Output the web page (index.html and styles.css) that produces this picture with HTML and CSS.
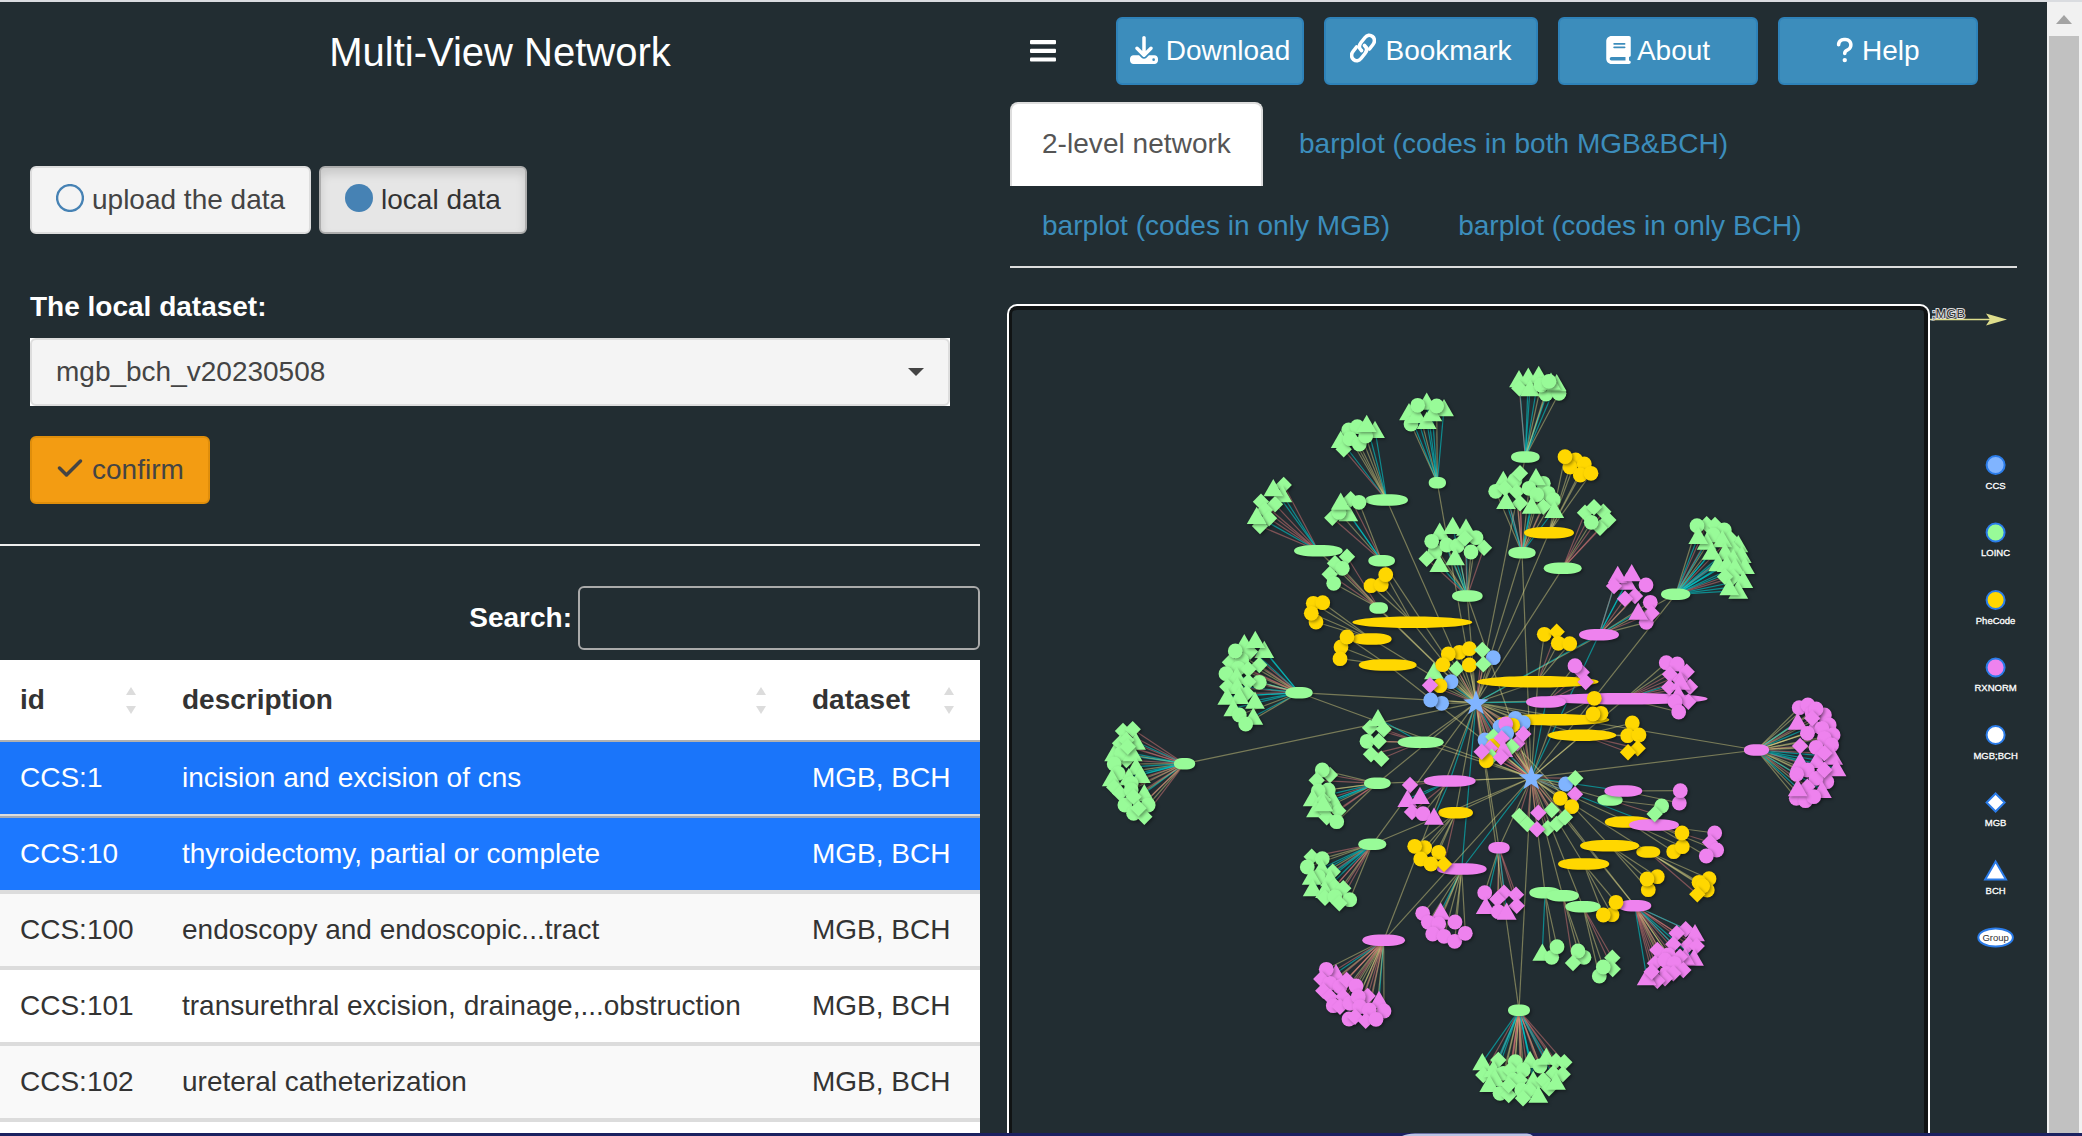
FILE: index.html
```html
<!DOCTYPE html>
<html lang="en">
<head>
<meta charset="utf-8">
<title>Multi-View Network</title>
<link rel="stylesheet" href="styles.css">
</head>
<body>
<div class="topline"></div>
<main class="page">
  <section class="left">
    <h1 class="title">Multi-View Network</h1>
    <div class="controls">
      <div class="choices">
        <button class="btn"><svg class="ico" viewBox="0 0 28 28"><circle cx="14" cy="14" r="12.9" fill="none" stroke="#4682b4" stroke-width="2.4"/></svg>upload the data</button>
        <button class="btn active"><svg class="ico" viewBox="0 0 28 28"><circle cx="14" cy="14" r="14" fill="#4682b4"/></svg>local data</button>
      </div>
      <label class="field-label">The local dataset:</label>
      <div class="select"><div class="select-face">mgb_bch_v20230508<i class="caret"></i></div></div>
      <button class="btn confirm"><svg class="ico check" viewBox="0 0 448 512"><path fill="currentColor" d="M438.6 105.4c12.5 12.5 12.5 32.8 0 45.3l-256 256c-12.5 12.5-32.8 12.5-45.3 0l-128-128c-12.5-12.5-12.5-32.8 0-45.3s32.8-12.5 45.3 0L160 338.7 393.4 105.4c12.5-12.5 32.8-12.5 45.3 0z"/></svg>confirm</button>
    </div>
    <div class="rule"></div>
    <div class="search"><label>Search:</label><input type="text" class="search-box"></div>
    <div class="table">
      <div class="tr th"><div>id<i class="sort"></i></div><div>description<i class="sort"></i></div><div>dataset<i class="sort"></i></div></div>
      <div class="tr sel"><div>CCS:1</div><div>incision and excision of cns</div><div>MGB, BCH</div></div>
      <div class="tr sel second"><div>CCS:10</div><div>thyroidectomy, partial or complete</div><div>MGB, BCH</div></div>
      <div class="tr odd"><div>CCS:100</div><div>endoscopy and endoscopic...tract</div><div>MGB, BCH</div></div>
      <div class="tr"><div>CCS:101</div><div>transurethral excision, drainage,...obstruction</div><div>MGB, BCH</div></div>
      <div class="tr odd"><div>CCS:102</div><div>ureteral catheterization</div><div>MGB, BCH</div></div>
      <div class="tr last"></div>
    </div>
  </section>
  <section class="right">
    <header class="toolbar">
      <svg class="bars" viewBox="0 0 26 22"><g fill="#fff"><rect width="26" height="4.2" rx="1"/><rect y="8.7" width="26" height="4.2" rx="1"/><rect y="17.4" width="26" height="4.2" rx="1"/></g></svg>
      <button class="tool w1"><svg class="ico" viewBox="0 0 512 512"><path fill="currentColor" d="M288 32c0-17.7-14.3-32-32-32s-32 14.3-32 32V274.7l-73.4-73.4c-12.5-12.5-32.8-12.5-45.3 0s-12.5 32.8 0 45.3l128 128c12.5 12.5 32.8 12.5 45.3 0l128-128c12.5-12.5 12.5-32.8 0-45.3s-32.8-12.5-45.3 0L288 274.7V32zM64 352c-35.3 0-64 28.7-64 64v32c0 35.3 28.7 64 64 64H448c35.3 0 64-28.7 64-64V416c0-35.3-28.7-64-64-64H346.5l-45.3 45.3c-25 25-65.5 25-90.5 0L165.5 352H64zm368 56a24 24 0 1 1 0 48 24 24 0 1 1 0-48z"/></svg>Download</button>
      <button class="tool w2"><svg class="ico link" viewBox="0 0 26 30"><g fill="none" stroke="currentColor" stroke-width="3.6" stroke-linecap="round"><path d="M11.5 17.5C8.5 15 9 12 11 9.5L15 4.5C17 2 20 1.5 22.5 3.5S25 9 23 11.5L19.5 16"/><path d="M14.5 12.5C17.5 15 17 18 15 20.5L11 25.5C9 28 6 28.5 3.5 26.5S1 21 3 18.5L6.5 14"/></g></svg>Bookmark</button>
      <button class="tool"><svg class="ico book" viewBox="0 0 448 512"><path fill="currentColor" d="M96 0C43 0 0 43 0 96V416c0 53 43 96 96 96H384h32c17.7 0 32-14.3 32-32s-14.3-32-32-32V384c17.7 0 32-14.3 32-32V32c0-17.7-14.3-32-32-32H384 96zm0 384H352v64H96c-17.7 0-32-14.3-32-32s14.3-32 32-32zm32-240c0-8.8 7.2-16 16-16H336c8.8 0 16 7.2 16 16s-7.2 16-16 16H144c-8.8 0-16-7.2-16-16zm16 48H336c8.8 0 16 7.2 16 16s-7.2 16-16 16H144c-8.8 0-16-7.2-16-16s7.2-16 16-16z"/></svg>About</button>
      <button class="tool"><svg class="ico quest" viewBox="0 0 320 512"><path fill="currentColor" d="M80 160c0-35.3 28.7-64 64-64h32c35.3 0 64 28.7 64 64v3.6c0 21.8-11.1 42.1-29.4 53.8l-42.2 27.1c-25.2 16.2-40.4 44.1-40.4 74V320c0 17.7 14.3 32 32 32s32-14.3 32-32v-1.4c0-8.2 4.2-15.8 11-20.2l42.2-27.1c36.6-23.6 58.8-64.1 58.8-107.7V160c0-70.7-57.3-128-128-128H144C73.3 32 16 89.3 16 160c0 17.7 14.3 32 32 32s32-14.3 32-32zm80 320a40 40 0 1 0 0-80 40 40 0 1 0 0 80z"/></svg>Help</button>
    </header>
    <nav class="tabs">
      <a class="tab current">2-level network</a><a class="tab">barplot (codes in both MGB&amp;BCH)</a><a class="tab">barplot (codes in only MGB)</a><a class="tab">barplot (codes in only BCH)</a>
    </nav>
    <div class="plot">
      <div class="frame"><svg id="graph" width="919" height="830" viewBox="1009 306 919 830"></svg></div>
      <svg class="legend" width="118" height="832" viewBox="1930 304 118 832">
        <path d="M1930 319.5H1990" stroke="#dede8c" stroke-width="1.6"/><path d="M2007 319.5L1986 313.5L1990 319.5L1986 325.5Z" fill="#dede8c"/>
        <text x="1948.5" y="318" class="edge-label">;MGB</text>
        <g stroke="#2b7ce9" stroke-width="2">
          <circle cx="1995.6" cy="465" r="9" fill="#80b4ff"/>
          <circle cx="1995.6" cy="532.5" r="9" fill="#98fb98"/>
          <circle cx="1995.6" cy="600" r="9" fill="#ffd700"/>
          <circle cx="1995.6" cy="667.5" r="9" fill="#ee82ee"/>
          <circle cx="1995.6" cy="735" r="9" fill="#fff"/>
          <path d="M1995.6 793.5L2004.6 802.5L1995.6 811.5L1986.6 802.5Z" fill="#fff"/>
          <path d="M1995.6 861.5L2006 879.5H1985.2Z" fill="#fff"/>
          <ellipse cx="1995.6" cy="937.5" rx="17.3" ry="9" fill="#fff"/>
        </g>
        <g class="names">
          <text x="1995.6" y="489">CCS</text><text x="1995.6" y="556">LOINC</text><text x="1995.6" y="624">PheCode</text><text x="1995.6" y="691">RXNORM</text><text x="1995.6" y="759">MGB;BCH</text><text x="1995.6" y="826">MGB</text><text x="1995.6" y="894">BCH</text><text x="1995.6" y="940.5" class="dark">Group</text>
        </g>
      </svg>
    </div>
  </section>
  <aside class="scrollbar"><div class="up"></div><div class="thumb"></div></aside>
</main>
<div class="bottom"><svg width="140" height="3" viewBox="0 0 140 3"><path d="M3 3Q8 .5 16 .5H128Q132 .5 134 3Z" fill="#bac4e4"/></svg></div>
<script src="graph.js"></script>
</body>
</html>
```
FILE: styles.css
```css
* { box-sizing: border-box; }
html, body { margin: 0; height: 100%; overflow: hidden; }
body {
  display: flex; flex-direction: column;
  background: #222d32; color: #fff;
  font: 28px/40px "Liberation Sans", Arial, sans-serif;
}
button, input { font: inherit; margin: 0; }
.topline { height: 2px; flex: none; background: #dadce0; }
.page { flex: 1; min-height: 0; display: flex; }
.bottom { height: 3px; flex: none; background: #1b2160; padding-left: 1399px; }
.bottom svg { display: block; }

.left { width: 980px; flex: none; display: flex; flex-direction: column; overflow: hidden; }
.title { margin: 0; height: 164px; flex: none; padding-left: 20px; font-size: 40px; line-height: 100px; font-weight: 400; text-align: center; }
.controls { padding: 0 30px; height: 378px; flex: none; display: flex; flex-direction: column; align-items: flex-start; }
.choices { display: flex; gap: 8px; }
.ico { width: 28px; height: 28px; margin-right: 8px; flex: none; display: block; }
.btn {
  height: 68px; padding: 0 24px; border: 2px solid #ddd; border-radius: 6px;
  background: #f4f4f4; color: #444; display: flex; align-items: center; white-space: nowrap;
}
.btn .ico { position: relative; top: -2px; }
.btn.active { background: #e6e6e6; border-color: #adadad; color: #333; box-shadow: inset 0 6px 10px rgba(0,0,0,.125); }
.btn.confirm { background: #f39c12; border-color: #e08e0b; margin-top: 30px; }
.check { width: 28px; }
.field-label { margin-top: 53px; margin-bottom: 11px; font-weight: 700; }
.select { width: 920px; background: #fff; }
.select-face {
  height: 68px; padding: 0 24px; border: 2px solid #ddd; border-radius: 6px; background: #f4f4f4; color: #444;
  display: flex; align-items: center; justify-content: space-between;
}
.caret { border: 8px solid transparent; border-top-color: #444; border-bottom: 0; }
.rule { height: 2px; background: #eee; flex: none; }
.search { height: 114px; padding-top: 40px; display: flex; justify-content: flex-end; gap: 6px; font-weight: 700; line-height: 64px; flex: none; }
.search-box { width: 402px; height: 64px; border: 2px solid #aaa; border-radius: 6px; background: transparent; }
.table { color: #333; background: #fff; flex: 1; min-height: 0; }
.tr { display: grid; grid-template-columns: 162px 630px 188px; height: 76px; line-height: 72px; border-bottom: 4px solid #dcdcdc; white-space: nowrap; background: #fff; }
.tr > div { padding-left: 20px; display: flex; justify-content: space-between; align-items: center; }
.th { height: 82px; line-height: 80px; border-bottom: 2px solid #b1b1b1; font-weight: 700; }
.odd { background: #f9f9f9; }
.sel { background: #1a75fa; color: #fff; border-bottom: 2px solid #ddd; height: 74px; }
.sel.second { background: #1c78ff; border-top: 2px solid #a3abb5; height: 78px; border-bottom: 4px solid #dcdcdc; }
.last { height: 20px; border: 0; }
.sort { width: 10px; height: 27px; margin-right: 26px; display: flex; flex-direction: column; justify-content: space-between; }
.sort::before, .sort::after { content: ""; border: 5px solid transparent; }
.sort::before { border-top: 0; border-bottom: 8px solid #dcdcdc; }
.sort::after { border-bottom: 0; border-top: 8px solid #dcdcdc; }

.right { flex: 1; min-width: 0; display: flex; flex-direction: column; padding-left: 27px; overflow: hidden; }
.toolbar { display: flex; align-items: center; gap: 20px; height: 68px; margin: 15px 0 17px 23px; flex: none; }
.bars { width: 26px; height: 22px; margin-right: 40px; }
.tool {
  width: 200px; height: 68px; padding: 0; border: 2px solid #2e82b9; border-radius: 6px;
  background: #3c8dbc; color: #fff; display: flex; align-items: center; justify-content: center;
}
.tool .ico { position: relative; top: -1px; }
.tool.w1 { width: 188px; }
.tool.w2 { width: 214px; }
.ico.link { width: 26px; height: 30px; top: -3px; margin-right: 9px; }
.ico.book { width: 25px; margin-right: 6px; }
.ico.quest { width: 17.5px; }
.tabs { width: 1007px; margin-left: 3px; display: flex; flex-wrap: wrap; height: 166px; border-bottom: 2px solid #ddd; flex: none; align-content: flex-start; letter-spacing: .04px; }
.tab { height: 84px; padding: 20px 30px; border: 2px solid transparent; border-radius: 8px 8px 0 0; margin: 0 4px -2px 0; color: #3c8dbc; white-space: nowrap; }
.tab.current { background: #fff; border-color: #ddd; border-bottom: 0; color: #555; }
.plot { display: flex; margin-top: 36px; flex: 1; min-height: 0; }
.frame { width: 923px; flex: none; border: 2px solid #fff; border-bottom: 0; border-radius: 10px 10px 0 0; box-shadow: inset 0 4px 0 #101314, inset -4px 0 0 #101314, inset 3px 0 0 #101314; overflow: hidden; }
.frame svg, .legend { display: block; }
.legend { align-self: flex-start; flex: none; }
.legend text { font-family: "Liberation Sans", Arial, sans-serif; text-anchor: middle; }
.names { font-size: 9.5px; fill: #fff; stroke: #fff; stroke-width: .3px; }
.names .dark { fill: #333; stroke: none; }
.edge-label { font-size: 13px; fill: #343434; stroke: #ddd; stroke-width: 2px; paint-order: stroke; }

.scrollbar { width: 35px; flex: none; background: #f1f1f1; display: flex; flex-direction: column; padding: 0 3px 0 2px; }
.up { height: 34px; display: flex; align-items: center; justify-content: center; flex: none; }
.up::before { content: ""; border: 8px solid transparent; border-top: 0; border-bottom: 9px solid #a3a3a3; }
.thumb { flex: 1; background: #c1c1c1; }
```
FILE: graph.js
```js
// Network data. Each block has an origin (px), a scale (units per px) and hubs.
// hub: "x y rx colour links | leaves"; links pair a star (1 or 2) with an edge colour.
// leaf: shape (c circle, d diamond, t triangle), x, y.
const COLORS = { g: '#98fb98', y: '#ffd700', p: '#ee82ee', b: '#80b4ff' };
const EDGES = { k: 'rgba(240,230,140,.42)', c: 'rgba(0,206,209,.58)', r: 'rgba(240,128,128,.45)' };
const LEAF_EDGE = { c: 'k', d: 'r', t: 'c' };
const STARS = { 1: [1476, 702.7], 2: [1531.3, 777.7] };

const BLOCKS = [
  { o: [1220, 350], s: [3, 3], hubs: [
    '652 398 26 g 1k|t 620 155;t 567 187;t 672 175;c 573 222;t 590 195;t 620 213;t 637 190;c 593 166;c 650 168',
    '500 450 64 g 1k|c 386 240;c 412 230;t 465 240;t 362 270;d 371 298;c 390 266;c 418 282;c 437 258;t 440 222',
    '295 602 73 g 1k|d 191 405;t 187 433;t 160 415;d 123 455;d 165 463;d 135 480;d 147 505;d 120 528;t 110 498',
    '485 632 40 g 1k|d 392 448;c 417 457;d 337 503;t 385 490;c 357 487;t 362 455',
    '476 774 28 g 1k|d 381 620;d 345 640;c 367 655;d 329 673;c 341 700',
    '577 817 180 y 1k|c 453 707;c 484 704;c 497 674',
    '742 738 46 g 1k2k|t 659 545;t 698 528;t 738 533;c 768 563;d 792 593;c 645 605;c 635 574;d 620 626;c 680 585;c 712 587;d 735 565;c 753 606;t 705 622;t 658 642'] },
  { o: [1480, 350], s: [3, 3], hubs: [
    '136 321 43 g 1k|t 117 88;t 145 80;t 176 75;d 118 115;t 150 115;c 198 132;c 183 105;c 237 130;t 230 100;t 213 95;c 207 94',
    '126 608 41 g 1k2k|t 70 390;c 105 390;d 120 370;c 190 400;t 168 382;c 47 424;d 75 415;d 110 425;c 147 415;c 205 430;c 170 434;d 120 460;t 78 453;c 220 449;d 190 470;t 155 467;t 223 480',
    '207 548 75 y 1k|c 287 330;c 270 351;c 255 320;c 313 342;c 301 375;c 333 370',
    '248 655 57 g 1k|d 315 488;d 370 485;d 342 472;d 385 510;d 360 533;c 334 517',
    '587 733 44 g 1k2k|d 680 523;d 705 525;c 733 540;c 651 527;c 700 555;t 680 575;t 655 558;d 750 565;t 775 583;d 760 600;t 727 568;t 735 605;t 695 605;t 785 615;t 760 625;t 715 640;t 740 642;t 795 648;t 765 650;d 760 682;d 735 680;t 790 690;t 775 722;t 748 712',
    '357 854 60 p 1c2c|t 440 695;t 413 675;d 402 708;t 455 670;c 498 705;d 465 738;d 435 746;c 511 757;c 499 817;d 515 790;t 475 785'] },
  { o: [1200, 600], s: [3, 3], hubs: [
    '515 117 60 y 1k|c 340 10;c 368 8;c 348 66;c 334 40',
    '563 195 87 y 2k|c 423 141;c 441 111;c 420 176',
    '297 278 41 g 1k2k|t 133 130;t 193 150;d 150 155;t 166 120;d 90 187;c 125 180;c 106 153;d 178 195;c 115 205;d 145 208;c 78 221;t 110 228;c 178 247;d 145 245;d 82 260;t 112 258;t 82 290;d 140 280;t 118 288;t 165 302;t 100 325;c 118 345;t 160 350;c 137 372',
    '662 427 69 g 1k2k|d 510 383;t 534 355;d 551 388;c 501 424;d 536 424;d 513 463;d 544 476',
    '532 550 40 g 1k2k|d 390 525;c 367 510;d 350 541;c 385 570;c 355 573;t 338 595;t 400 600;d 370 600;t 348 628;c 375 625;d 415 632;d 380 652;c 410 665;t 370 610',
    '749 543 78 p 1c2k|d 630 555;t 622 597;t 660 588;d 636 636;c 669 641;t 702 650'] },
  { o: [1090, 690], s: [2.063, 3], hubs: [
    '195 221 22 g 1k|d 68 123;d 88 118;t 95 155;t 50 190;d 62 160;d 75 150;d 75 210;c 65 190;c 50 222;c 58 250;t 88 190;d 78 170;t 95 230;t 45 265;t 80 262;t 105 255;c 85 280;d 50 292;d 62 310;c 85 300;t 112 310;c 72 345;d 90 320;c 120 345;c 90 370;d 112 380;d 100 355',
    '1375 180 26 p 1k2k|c 1463 53;c 1481 45;c 1515 75;c 1490 70;c 1498 57;t 1460 95;t 1495 105;d 1490 85;c 1525 105;c 1510 115;c 1480 130;c 1533 135;c 1515 145;d 1465 168;c 1530 165;c 1498 172;t 1465 215;t 1500 210;t 1533 200;d 1515 190;t 1540 235;c 1480 240;c 1458 253;c 1520 275;c 1498 265;d 1515 240;t 1510 300;d 1480 290;c 1457 325;c 1476 332;c 1493 320;t 1460 295'] },
  { o: [1280, 800], s: [3, 3], hubs: [
    '545 207 75 p 1c2c|c 428 340;t 482 335;c 445 367;c 476 372;c 525 366;c 458 402;c 492 409;c 524 424;c 556 400',
    '527 38 52 y 1k2k|c 434 143;c 404 139;c 476 157;c 422 177;c 453 192;d 492 192',
    '277 133 42 g 1k2k|d 95 170;c 127 176;c 82 201;t 125 205;d 158 215;c 115 230;t 95 230;t 150 235;t 98 265;d 165 260;t 135 270;d 190 265;d 135 293;c 165 290;c 209 299;d 178 310',
    '311 421 64 p 1k2k|t 168 520;c 139 508;d 124 537;c 150 550;c 180 560;d 200 540;c 228 558;d 130 572;d 150 590;d 190 590;c 160 617;d 180 620;c 210 610;d 263 588;c 235 590;t 297 600;c 240 620;c 312 633;c 207 657;d 225 650;c 268 630;d 257 662;c 288 658',
    '657 143 32 p 1k2k|c 614 278;d 672 278;d 708 284;d 652 298;d 710 317;t 617 318;c 655 335;t 680 335',
    '717 631 33 g 1k2k|t 607 787;d 655 780;c 706 785;t 750 780;c 780 798;t 799 770;d 828 783;d 853 787;d 610 825;t 640 808;c 670 820;d 690 810;c 730 810;c 700 840;d 820 820;d 848 823;t 645 835;t 628 852;c 660 880;d 720 840;t 760 840;d 790 840;d 807 865;t 828 845;d 686 885;d 686 855;c 725 870;d 750 870;d 729 895;t 775 884',
    '795 278 47 g 2k|t 787 458;c 815 472;c 831 440'] },
  { o: [1540, 760], s: [3, 3], hubs: [
    '68 407 49 g 2k|c 132 592;c 114 573;d 99 609',
    '129 440 53 g 2k|c 178 648;d 217 593;d 218 627;c 190 621',
    '284 437 50 p 1k2k|d 437 508;t 465 520;d 410 520;d 445 555;d 470 558;d 400 553;d 352 570;c 385 585;t 462 593;t 435 590;d 420 590;d 345 610;c 375 600;c 403 610;d 430 630;c 380 640;d 400 640;d 375 655;d 352 662;t 320 652;d 335 635',
    '131 312 77 y 2k|c 216 464;c 228 427;c 190 465',
    '325 276 36 y 2k|c 507 356;c 502 390;c 477 367;c 488 378;d 472 403',
    '209 257 89 y 1k|c 352 350;c 325 389;c 321 357',
    '264 186 70 y 2k|c 401 275;c 427 260;c 426 219',
    '342 195 75 p 2c|c 524 219;d 510 247;c 530 270;c 499 288',
    '210 120 38 g 2k|c 365 138;d 344 162',
    '250 93 57 p 2c|c 418 129;c 421 92'] },
  { o: [1440, 600], s: [3, 3], hubs: [
    '293 245 183 y 1k2k|c 313 103;d 350 95;c 355 130;c 389 131',
    '555 296 248 p 1k2k|c 679 188;c 712 192;d 740 215;d 690 223;d 720 240;d 750 260;d 688 262;t 722 245;t 715 282;d 745 305;c 705 305;c 716 336',
    '318 306 60 p 1c2c|d 425 217;c 405 197;d 437 246',
    '340 359 168 y 1k2k|c 463 295;c 483 340;c 459 342',
    '426 406 103 y 1k2k|c 577 369;c 563 407;c 597 405;d 593 445;d 564 457'] }
];

// Nodes tied straight to the stars: origin, star numbers, "shape colour x y".
const DIRECT = [
  { o: [1200, 600], to: '1', n: 'cy 778 157;cy 745 162;cy 808 146;dg 847 150;cb 880 173;tg 702 214;cy 728 194;dg 770 206;cy 808 195;dg 850 193;cb 753 245;cy 720 257;dp 690 256;cb 725 310;cb 692 300' },
  { o: [1440, 600], to: '12', n: 'cb 226 355;cb 250 368;cb 180 380;cy 218 376;cp 197 372;cb 135 420;cb 200 400;dg 160 410;cy 160 438;dp 185 415;dp 232 430;dg 215 440;dp 250 402;dp 150 445;tp 190 447;dg 155 470;cy 139 482;dp 183 472;dp 125 455' },
  { o: [1440, 600], to: '2', n: 'cb 377 552;dg 406 535;dp 405 583;cy 361 595;cy 395 620;dg 335 630;dp 295 638;dg 238 648;dg 262 672;dg 323 685;dg 350 672;dg 375 652;dp 291 688' }
];

const edges = [], hubs = [], leaves = [];
const f = v => v.toFixed(1);
function line(a, b, c) {
  edges.push(`<path d="M${f(a[0])} ${f(a[1])}L${f(b[0])} ${f(b[1])}" stroke="${EDGES[c]}"/>`);
}
function leaf(shape, x, y, color) {
  const fill = COLORS[color];
  if (shape === 'c') leaves.push(`<circle cx="${f(x)}" cy="${f(y)}" r="7.4" fill="${fill}"/>`);
  else if (shape === 'd') leaves.push(`<path d="M${f(x)} ${f(y - 8.2)}l8.2 8.2l-8.2 8.2l-8.2 -8.2z" fill="${fill}"/>`);
  else leaves.push(`<path d="M${f(x)} ${f(y - 9.2)}l9.9 17.2h-19.8z" fill="${fill}"/>`);
}
function ellipse(x, y, rx, ry, fill) {
  const k = rx < 30 ? 0.66 : 0.57, kx = rx * k, ky = ry * k;
  return `<path d="M${f(x - rx)} ${f(y)}C${f(x - rx)} ${f(y - ky)} ${f(x - kx)} ${f(y - ry)} ${f(x)} ${f(y - ry)}S${f(x + rx)} ${f(y - ky)} ${f(x + rx)} ${f(y)}S${f(x + kx)} ${f(y + ry)} ${f(x)} ${f(y + ry)}S${f(x - rx)} ${f(y + ky)} ${f(x - rx)} ${f(y)}z" fill="${fill}"/>`;
}
for (const b of BLOCKS) {
  const at = (x, y) => [b.o[0] + x / b.s[0], b.o[1] + y / b.s[1]];
  for (const h of b.hubs) {
    const [head, tail] = h.split('|');
    const [x, y, rx, color, links] = head.split(' ');
    const c = at(+x, +y);
    hubs.push(ellipse(c[0], c[1], rx / b.s[0], 5.8, COLORS[color]));
    for (let i = 0; i < links.length; i += 2) line(c, STARS[links[i]], links[i + 1]);
    for (const l of tail.split(';')) {
      const [shape, lx, ly] = l.split(' ');
      const p = at(+lx, +ly);
      line(p, c, LEAF_EDGE[shape]);
      leaf(shape, p[0], p[1], color);
    }
  }
}
for (const d of DIRECT) {
  for (const n of d.n.split(';')) {
    const [kind, x, y] = n.split(' ');
    const p = [d.o[0] + x / 3, d.o[1] + y / 3];
    for (const s of d.to) line(p, STARS[s], LEAF_EDGE[kind[0]]);
    leaf(kind[0], p[0], p[1], kind[1]);
  }
}
const stars = Object.values(STARS).map(([x, y]) => {
  const pts = [];
  for (let i = 0; i < 10; i++) {
    const r = i % 2 ? 5.4 : 13.4, a = Math.PI * i / 5;
    pts.push(f(x + r * Math.sin(a)) + ',' + f(y + 0.8 - r * Math.cos(a)));
  }
  return `<polygon points="${pts.join(' ')}" fill="${COLORS.b}"/>`;
});
const shadow = list => list.map(s => `<g filter="url(#drop)">${s}</g>`).join('');
document.getElementById('graph').innerHTML =
  '<defs><filter id="drop" x="-30%" y="-60%" width="170%" height="250%" color-interpolation-filters="sRGB"><feDropShadow dx="1.5" dy="1.5" stdDeviation="1.5" flood-color="#000" flood-opacity=".38"/></filter></defs>' +
  `<g fill="none" stroke-width="1.2">${edges.join('')}</g>` + shadow(hubs) + shadow(leaves) + shadow(stars);
```
